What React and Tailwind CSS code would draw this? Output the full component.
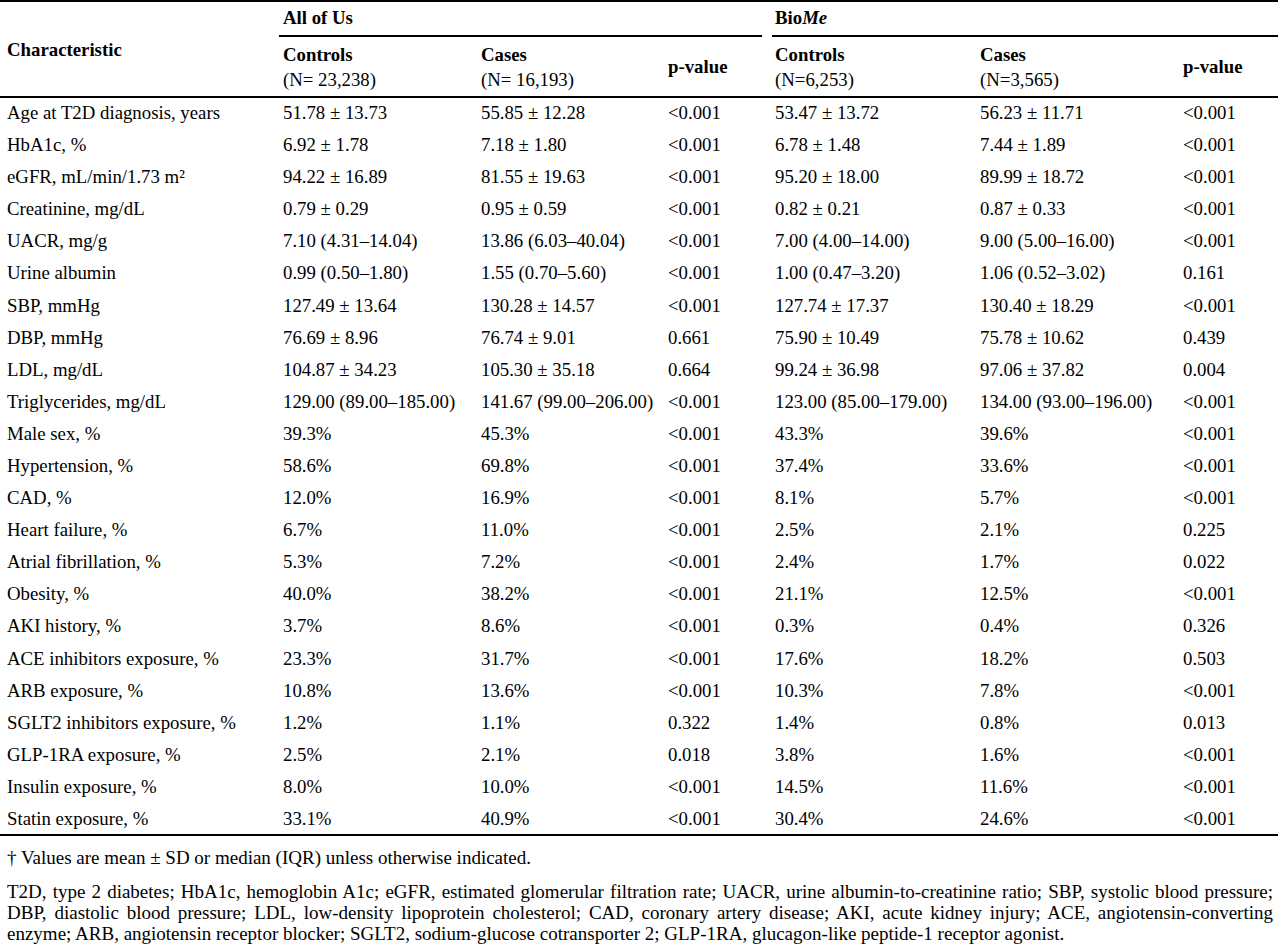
import React from 'react';

const rows = [
  ['Age at T2D diagnosis, years', '51.78 ± 13.73', '55.85 ± 12.28', '<0.001', '53.47 ± 13.72', '56.23 ± 11.71', '<0.001'],
  ['HbA1c, %', '6.92 ± 1.78', '7.18 ± 1.80', '<0.001', '6.78 ± 1.48', '7.44 ± 1.89', '<0.001'],
  ['eGFR, mL/min/1.73 m²', '94.22 ± 16.89', '81.55 ± 19.63', '<0.001', '95.20 ± 18.00', '89.99 ± 18.72', '<0.001'],
  ['Creatinine, mg/dL', '0.79 ± 0.29', '0.95 ± 0.59', '<0.001', '0.82 ± 0.21', '0.87 ± 0.33', '<0.001'],
  ['UACR, mg/g', '7.10 (4.31–14.04)', '13.86 (6.03–40.04)', '<0.001', '7.00 (4.00–14.00)', '9.00 (5.00–16.00)', '<0.001'],
  ['Urine albumin', '0.99 (0.50–1.80)', '1.55 (0.70–5.60)', '<0.001', '1.00 (0.47–3.20)', '1.06 (0.52–3.02)', '0.161'],
  ['SBP, mmHg', '127.49 ± 13.64', '130.28 ± 14.57', '<0.001', '127.74 ± 17.37', '130.40 ± 18.29', '<0.001'],
  ['DBP, mmHg', '76.69 ± 8.96', '76.74 ± 9.01', '0.661', '75.90 ± 10.49', '75.78 ± 10.62', '0.439'],
  ['LDL, mg/dL', '104.87 ± 34.23', '105.30 ± 35.18', '0.664', '99.24 ± 36.98', '97.06 ± 37.82', '0.004'],
  ['Triglycerides, mg/dL', '129.00 (89.00–185.00)', '141.67 (99.00–206.00)', '<0.001', '123.00 (85.00–179.00)', '134.00 (93.00–196.00)', '<0.001'],
  ['Male sex, %', '39.3%', '45.3%', '<0.001', '43.3%', '39.6%', '<0.001'],
  ['Hypertension, %', '58.6%', '69.8%', '<0.001', '37.4%', '33.6%', '<0.001'],
  ['CAD, %', '12.0%', '16.9%', '<0.001', '8.1%', '5.7%', '<0.001'],
  ['Heart failure, %', '6.7%', '11.0%', '<0.001', '2.5%', '2.1%', '0.225'],
  ['Atrial fibrillation, %', '5.3%', '7.2%', '<0.001', '2.4%', '1.7%', '0.022'],
  ['Obesity, %', '40.0%', '38.2%', '<0.001', '21.1%', '12.5%', '<0.001'],
  ['AKI history, %', '3.7%', '8.6%', '<0.001', '0.3%', '0.4%', '0.326'],
  ['ACE inhibitors exposure, %', '23.3%', '31.7%', '<0.001', '17.6%', '18.2%', '0.503'],
  ['ARB exposure, %', '10.8%', '13.6%', '<0.001', '10.3%', '7.8%', '<0.001'],
  ['SGLT2 inhibitors exposure, %', '1.2%', '1.1%', '0.322', '1.4%', '0.8%', '0.013'],
  ['GLP-1RA exposure, %', '2.5%', '2.1%', '0.018', '3.8%', '1.6%', '<0.001'],
  ['Insulin exposure, %', '8.0%', '10.0%', '<0.001', '14.5%', '11.6%', '<0.001'],
  ['Statin exposure, %', '33.1%', '40.9%', '<0.001', '30.4%', '24.6%', '<0.001'],
];

const widths = ['w-[278px]', 'w-[198px]', 'w-[187px]', 'w-[107px]', 'w-[205px]', 'w-[203px]', 'w-[100px]'];

export default function App() {
  return (
    <div className="w-[1280px] bg-white text-black font-['Liberation_Serif',serif] text-[18.8px]">
      <table className="w-[1278px] table-fixed border-collapse">
        <colgroup>
          {widths.map((w, i) => <col key={i} className={w} />)}
        </colgroup>
        <thead>
          <tr className="h-[36px] border-t-2 border-black">
            <th rowSpan={2} className="pl-[7px] pt-[3px] text-left font-bold align-middle border-b-2 border-black">Characteristic</th>
            <th colSpan={3} className="p-0 text-left font-bold align-bottom">
              <div className="ml-[1px] mr-[8px] pl-[4px] pb-[5px] border-b-2 border-black leading-[24px]">All of Us</div>
            </th>
            <th colSpan={3} className="p-0 text-left font-bold align-bottom">
              <div className="ml-[2px] pl-[3px] pb-[5px] border-b-2 border-black leading-[24px]">
                Bio<i>Me</i>
              </div>
            </th>
          </tr>
          <tr className="h-[60px] border-b-2 border-black text-left leading-[25px]">
            <th className="pl-[5px] font-bold align-middle">
              Controls<br /><span className="font-normal">(N= 23,238)</span>
            </th>
            <th className="pl-[5px] font-bold align-middle">
              Cases<br /><span className="font-normal">(N= 16,193)</span>
            </th>
            <th className="pl-[5px] font-bold align-middle">p-value</th>
            <th className="pl-[5px] font-bold align-middle">
              Controls<br /><span className="font-normal">(N=6,253)</span>
            </th>
            <th className="pl-[5px] font-bold align-middle">
              Cases<br /><span className="font-normal">(N=3,565)</span>
            </th>
            <th className="pl-[5px] font-bold align-middle">p-value</th>
          </tr>
        </thead>
        <tbody className="border-b-2 border-black">
          {rows.map((r, i) => (
            <tr key={i} className="h-[32.1px]">
              {r.map((c, j) => (
                <td key={j} className={j === 0 ? 'pl-[7px] p-0 whitespace-nowrap' : 'pl-[5px] p-0 whitespace-nowrap'}>
                  {c}
                </td>
              ))}
            </tr>
          ))}
        </tbody>
      </table>

      <div className="px-[7px] pt-[11px] leading-[21px] text-[19px]">
        <p>† Values are mean ± SD or median (IQR) unless otherwise indicated.</p>
        <p className="mt-[13px] text-justify">
          T2D, type 2 diabetes; HbA1c, hemoglobin A1c; eGFR, estimated glomerular filtration rate; UACR, urine albumin-to-creatinine ratio; SBP, systolic blood pressure; DBP, diastolic blood pressure; LDL, low-density lipoprotein cholesterol; CAD, coronary artery disease; AKI, acute kidney injury; ACE, angiotensin-converting enzyme; ARB, angiotensin receptor blocker; SGLT2, sodium-glucose cotransporter 2; GLP-1RA, glucagon-like peptide-1 receptor agonist.
        </p>
      </div>
    </div>
  );
}
